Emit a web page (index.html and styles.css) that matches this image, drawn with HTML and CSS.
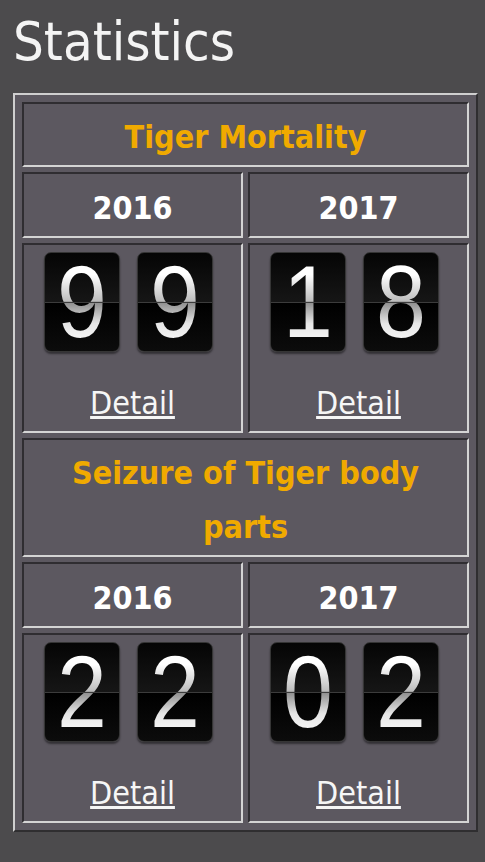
FILE: index.html
```
<!DOCTYPE html>
<html lang="en">
<head>
    <meta charset="UTF-8">
    <title>Statistics</title>
    <link rel="stylesheet" href="styles.css">
</head>
<body>
    <div class="page">
        <h1 class="heading">Statistics</h1>

        <table class="stats">
            <!-- Tiger Mortality -->
            <tr>
                <td colspan="2" class="title">Tiger Mortality</td>
            </tr>
            <tr>
                <td class="year">2016</td>
                <td class="year">2017</td>
            </tr>
            <tr>
                <td class="count">
                    <div class="flip">
                        <span class="card"><span class="digit">9</span></span>
                        <span class="card"><span class="digit">9</span></span>
                    </div>
                    <div class="detail-row"><a href="#" class="detail">Detail</a></div>
                </td>
                <td class="count">
                    <div class="flip">
                        <span class="card"><span class="digit">1</span></span>
                        <span class="card"><span class="digit">8</span></span>
                    </div>
                    <div class="detail-row"><a href="#" class="detail">Detail</a></div>
                </td>
            </tr>

            <!-- Seizure of Tiger body parts -->
            <tr>
                <td colspan="2" class="title">Seizure of Tiger body parts</td>
            </tr>
            <tr>
                <td class="year">2016</td>
                <td class="year">2017</td>
            </tr>
            <tr>
                <td class="count">
                    <div class="flip">
                        <span class="card"><span class="digit">2</span></span>
                        <span class="card"><span class="digit">2</span></span>
                    </div>
                    <div class="detail-row"><a href="#" class="detail">Detail</a></div>
                </td>
                <td class="count">
                    <div class="flip">
                        <span class="card"><span class="digit">0</span></span>
                        <span class="card"><span class="digit">2</span></span>
                    </div>
                    <div class="detail-row"><a href="#" class="detail">Detail</a></div>
                </td>
            </tr>
        </table>
    </div>
</body>
</html>
```

FILE: styles.css
```
body {
    margin: 0;
    background-color: #4c4b4d;
    font-family: 'DejaVu Sans Condensed', 'DejaVu Sans', sans-serif;
    color: #ffffff;
}
.page {
    padding: 0 7px 0 13px;
}
.heading {
    margin: 15px 0 25px 0;
    font-size: 54px;
    line-height: 53px;
    font-weight: normal;
    color: #f4f4f4;
}
.stats {
    width: 465px;
    border-collapse: separate;
    border-spacing: 5px;
    padding: 2px;
    border: 2px solid;
    border-color: #cfcfcf #2f2e30 #2f2e30 #cfcfcf;
    background-color: #5c5860;
    table-layout: fixed;
}
.stats td {
    width: 50%;
    border: 2px solid;
    border-color: #2f2d31 #d4d4d4 #d4d4d4 #2f2d31;
    text-align: center;
    vertical-align: top;
    font-size: 32px;
    line-height: 54px;
}
.title {
    padding: 6px 8px 1px;
    color: #f0aa00;
    font-weight: bold;
}
.year {
    padding: 7px 0 1px;
    font-weight: bold;
}
.count {
    padding: 7px 0 1px;
}
.flip {
    display: flex;
    justify-content: center;
    gap: 17px;
    padding-right: 9px;
}
.card {
    position: relative;
    display: block;
    width: 76px;
    height: 100px;
    box-sizing: border-box;
    border: 1px solid #353535;
    border-radius: 7px;
    background: linear-gradient(to bottom, #050505 0%, #161616 50%, #000000 51%, #0c0c0c 100%);
    box-shadow: 0 2px 2px rgba(0, 0, 0, 0.45);
}
/* line across the middle of the card */
.card::after {
    content: '';
    position: absolute;
    left: 0;
    right: 0;
    top: 50%;
    height: 1px;
    background-color: #3c3c3c;
}
.digit {
    display: block;
    font-family: 'Liberation Sans', Arial, sans-serif;
    font-size: 102px;
    line-height: 98px;
    text-align: center;
    transform: scaleX(0.88);
    background: linear-gradient(to bottom, #ffffff 22%, #bdbdbd 49%, #8c8c8c 50%, #e6e6e6 72%, #ffffff 100%);
    -webkit-background-clip: text;
    background-clip: text;
    color: transparent;
}
.detail-row {
    margin-top: 24px;
}
.detail {
    color: #f6f6f6;
    text-decoration: underline;
}
```
